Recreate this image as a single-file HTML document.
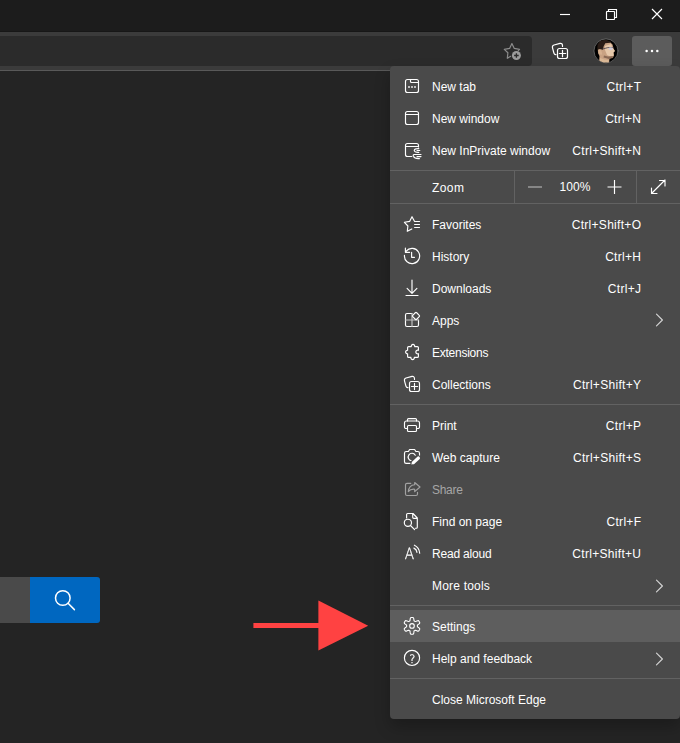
<!DOCTYPE html>
<html lang="en">
<head>
<meta charset="utf-8">
<title>Edge menu</title>
<style>
html,body{margin:0;padding:0;}
body{width:680px;height:743px;overflow:hidden;background:#242424;position:relative;
  font-family:"Liberation Sans",sans-serif;font-size:12px;color:#fff;}
.abs{position:absolute;}
#titlebar{left:0;top:0;width:680px;height:32px;background:#1c1c1c;}
#tline{left:0;top:31px;width:680px;height:1px;background:#171717;}
#toolbar{left:0;top:32px;width:680px;height:38px;background:#3b3b3b;}
#addr{left:-10px;top:36px;width:542px;height:30px;background:#2b2b2b;border-radius:4px;}
#tbline{left:0;top:70px;width:680px;height:1px;background:#595959;}
#morebtn{left:632px;top:36px;width:40px;height:30px;background:#5c5c5c;border-radius:3px;}
#search-grey{left:0;top:577px;width:30px;height:46px;background:#4a4a4a;}
#search-blue{left:30px;top:577px;width:70px;height:46px;background:#0067c0;border-radius:0 3px 3px 0;}
#menu{left:390px;top:66px;width:290px;height:653px;background:#4a4a4a;border-radius:4px;
  box-shadow:0 8px 16px rgba(0,0,0,.24);}
.row{position:absolute;left:0;width:290px;height:32px;line-height:32px;}
.row .lbl{position:absolute;left:42px;top:0;white-space:nowrap;}
.row .sc{position:absolute;right:39px;top:0;white-space:nowrap;letter-spacing:.3px;margin-right:-.3px;}
.row svg.ic{position:absolute;left:13px;top:7px;width:18px;height:18px;}
.row svg.chev{position:absolute;left:264px;top:9px;width:10px;height:14px;}
.sep{position:absolute;left:0;width:290px;height:1px;background:#626262;}
.hl{background:#5e5e5e;}
.dim{color:#a6a6a6;}
</style>
</head>
<body>
<div id="titlebar" class="abs"></div>
<div id="tline" class="abs"></div>
<div id="toolbar" class="abs"></div>
<div id="addr" class="abs"></div>
<div id="tbline" class="abs"></div>
<div id="morebtn" class="abs"></div>

<div id="search-grey" class="abs"></div>
<div id="search-blue" class="abs"></div>

<div id="menu" class="abs">
  <div class="row" style="top:5px"><span class="lbl">New tab</span><span class="sc">Ctrl+T</span></div>
  <div class="row" style="top:37px"><span class="lbl">New window</span><span class="sc">Ctrl+N</span></div>
  <div class="row" style="top:69px"><span class="lbl">New InPrivate window</span><span class="sc">Ctrl+Shift+N</span></div>
  <div class="sep" style="top:104px"></div>
  <div class="row" style="top:105px"><span class="lbl" style="left:42px;top:1px;letter-spacing:.4px">Zoom</span><span class="abs" style="left:169.5px;letter-spacing:.1px">100%</span></div>
  <div class="sep" style="top:137px"></div>
  <div class="abs" style="left:124px;top:105px;width:1px;height:32px;background:#626262"></div>
  <div class="abs" style="left:246px;top:105px;width:1px;height:32px;background:#626262"></div>
  <div class="row" style="top:143px"><span class="lbl">Favorites</span><span class="sc">Ctrl+Shift+O</span></div>
  <div class="row" style="top:175px"><span class="lbl">History</span><span class="sc">Ctrl+H</span></div>
  <div class="row" style="top:207px"><span class="lbl">Downloads</span><span class="sc">Ctrl+J</span></div>
  <div class="row" style="top:239px"><span class="lbl">Apps</span></div>
  <div class="row" style="top:271px"><span class="lbl" style="letter-spacing:-.25px">Extensions</span></div>
  <div class="row" style="top:303px"><span class="lbl">Collections</span><span class="sc">Ctrl+Shift+Y</span></div>
  <div class="sep" style="top:338px"></div>
  <div class="row" style="top:344px"><span class="lbl">Print</span><span class="sc">Ctrl+P</span></div>
  <div class="row" style="top:376px"><span class="lbl">Web capture</span><span class="sc">Ctrl+Shift+S</span></div>
  <div class="row dim" style="top:408px"><span class="lbl" style="letter-spacing:-.3px">Share</span></div>
  <div class="row" style="top:440px"><span class="lbl">Find on page</span><span class="sc">Ctrl+F</span></div>
  <div class="row" style="top:472px"><span class="lbl" style="letter-spacing:-.2px">Read aloud</span><span class="sc">Ctrl+Shift+U</span></div>
  <div class="row" style="top:504px"><span class="lbl" style="letter-spacing:.2px">More tools</span></div>
  <div class="sep" style="top:539px"></div>
  <div class="abs hl" style="left:0;top:544px;width:290px;height:32px"></div>
  <div class="row" style="top:545px"><span class="lbl">Settings</span></div>
  <div class="row" style="top:577px"><span class="lbl">Help and feedback</span></div>
  <div class="sep" style="top:612px"></div>
  <div class="row" style="top:618px"><span class="lbl">Close Microsoft Edge</span></div>
</div>

<svg id="ov" class="abs" style="left:0;top:0" width="680" height="743" viewBox="0 0 680 743" fill="none" stroke="#fff" stroke-width="1.150" stroke-linecap="round" stroke-linejoin="round">
  <!-- window controls -->
  <g stroke="#fff" stroke-linecap="butt" stroke-linejoin="miter">
    <path d="M560 14.5H570"/>
    <rect x="606.5" y="11.5" width="8" height="8" rx="0.500"/>
    <path d="M608.500 11V9.500H616.500V17.500H615"/>
    <path d="M652 9L662 19M662 9L652 19"/>
  </g>
  <!-- toolbar: add favorite star -->
  <g stroke="#8c8c8c" stroke-width="1.2">
    <path d="M510.700 56.300L507.300 58.300L507.900 52.800L504.300 49.400L509.600 48.400L511.900 43.500L514.300 48.400L519.500 49.400L518.300 50.600"/>
  </g>
  <circle cx="516.400" cy="55.500" r="4.500" fill="#9b9b9b" stroke="none"/>
  <path d="M514.100 55.500H518.700M516.400 53.200V57.800" stroke="#2b2b2b" stroke-width="1.300" stroke-linecap="butt"/>
  <!-- toolbar: collections -->
  <g stroke-width="1.2">
    <rect x="557.500" y="48.500" width="10" height="10" rx="2"/>
    <path d="M559.300 53.500H565.700M562.500 50.300V56.700"/>
    <path d="M562.500 46.500V45.800Q562.400 43 560 43.400L554 45Q552 45.600 552.500 47.800L553.900 53Q554.400 54.800 556 54.600"/>
  </g>
  <!-- avatar -->
  <defs>
    <clipPath id="avc"><circle cx="606" cy="50.900" r="11.700"/></clipPath>
    <filter id="avb" x="-20%" y="-20%" width="140%" height="140%"><feGaussianBlur stdDeviation="0.550"/></filter>
  </defs>
  <circle cx="606" cy="50.900" r="12" fill="#000" stroke="#777" stroke-width="0.700"/>
  <g clip-path="url(#avc)" stroke="none"><g filter="url(#avb)">
    <path d="M599 63L599.500 56L598 53L598.500 49.500L602 48L604 42.500L610 42L612.500 44.500L613.500 48.500L615 51L613.500 52.500L614 55L613 57.500L609.500 58.500L609 63Z" fill="#c9a283"/>
    <path d="M605 46L611 44L613 48.500L614.800 51L613.300 52.400L613.500 56L611 57L607 55L605 50Z" fill="#e6c8aa"/>
    <path d="M603.500 57.500L609 59L612.500 58L613 56L608 56.500L604 55.500Z" fill="#8b6a55"/>
    <path d="M599.800 63L600 58L604.500 59.500L608.800 60L608.500 63Z" fill="#d9b795"/>
    <path d="M597.300 52L597.600 44.500L600.500 40.800L606 39.800L611 41.800L610.300 42.800L605.300 43.200L603.600 46.500L603 49.800L600.500 49.300L598.800 50Z" fill="#2c1f17"/>
    <path d="M598 50.500Q597.800 48.800 600 49.300Q602 50.500 602 54.500Q600 55 598.800 53.500Z" fill="#d6b08f"/>
    <path d="M602.800 49L607.800 47.600L612.800 47.400" stroke="#4a4048" stroke-width="0.800" fill="none"/>
    <ellipse cx="610.700" cy="48.600" rx="2.300" ry="1.700" fill="#c9cbe0" opacity="0.750"/>
  </g></g>
  <!-- more button dots -->
  <g fill="#fff" stroke="none">
    <circle cx="646.6" cy="50.9" r="1.25"/><circle cx="652" cy="50.9" r="1.25"/><circle cx="657.3" cy="50.9" r="1.25"/>
  </g>
  <!-- search magnifier -->
  <g stroke-width="1.5">
    <circle cx="62.8" cy="598" r="7.3"/>
    <path d="M68.1 603.3L74.4 609.6"/>
  </g>
  <!-- red arrow -->
  <g stroke="none" fill="#ff4242">
    <rect x="253.4" y="623" width="66" height="5"/>
    <path d="M318.4 600.6L368.2 625.7L318.4 650.6Z"/>
  </g>

  <!-- New tab -->
  <rect x="405.5" y="79.5" width="13" height="13" rx="2"/>
  <path d="M410.5 79.5V81.5a1 1 0 0 0 1 1H418.5"/>
  <g fill="#fff" stroke="none"><rect x="408.2" y="86.2" width="1.6" height="1.6"/><rect x="411.2" y="86.2" width="1.6" height="1.6"/><rect x="414.2" y="86.2" width="1.6" height="1.6"/></g>
  <!-- New window -->
  <rect x="405.5" y="111.5" width="13" height="13" rx="2"/>
  <path d="M405.5 114.5H418.5"/>
  <!-- InPrivate -->
  <path d="M411.8 156.5H407.5a2 2 0 0 1-2-2V145.5a2 2 0 0 1 2-2H416.5a2 2 0 0 1 2 2V147M405.5 146.5H418.5"/>
  <path d="M418.8 148.6Q414.6 148.4 414.2 150.5Q414.6 152.6 418.8 152.4M417 150.5H419.8"/>
  <path d="M421 154.5H414.2Q412.8 154.6 413.4 156.2Q414.6 159 419.4 158.6M417 156.6H421"/>
  <!-- Zoom controls -->
  <path d="M528 187H542" stroke="#b4b4b4" stroke-linecap="butt"/>
  <path d="M607.5 187H621.5M614.5 180V194" stroke-linecap="butt"/>
  <path d="M651.5 193.5L665 180M659.5 180.5H665V186M651.5 188V193.5H657"/>
  <!-- Favorites -->
  <path d="M419.500 221.500H414.600L412 216.700L409.600 221.400L404.400 222.300L407.900 226L407.300 231.300L411.800 228.900M414.600 224.500H419.500M414.600 227.500H419.500"/>
  <!-- History -->
  <path d="M406.200 251.100A7.600 7.600 0 1 1 404.450 255.300M405.400 248V252.300H409.600M411.600 252.300V257.300H414.500"/>
  <!-- Downloads -->
  <path d="M412 280V293M407.1 288.4L412 293.3L416.9 288.4M406 295.5H418"/>
  <!-- Apps -->
  <path d="M412 313.5H407a1.5 1.5 0 0 0-1.5 1.5V325a1.5 1.5 0 0 0 1.5 1.5H417a1.5 1.5 0 0 0 1.5-1.5V320"/>
  <path d="M412 313.5V326.5M405.5 320H418.5" stroke="#c4c4c4"/>
  <rect x="413.2" y="313.2" width="5.6" height="5.6" rx="1" transform="rotate(45 416 316)"/>
  <!-- Extensions -->
  <path d="M408.600 346.600H411.300A1.750 1.750 0 1 1 414.700 346.600H417.400a1 1 0 0 1 1 1V350.300A1.850 1.850 0 1 0 418.400 353.700V356.400a1 1 0 0 1-1 1H414.300A1.750 1.750 0 1 1 410.900 357.400H408.600a1 1 0 0 1-1-1V353.700A1.720 1.720 0 1 1 407.600 350.300V347.600a1 1 0 0 1 1-1Z"/>
  <!-- Collections -->
  <rect x="409.5" y="381.5" width="10" height="10" rx="2"/>
  <path d="M411.4 386.5H417.6M414.5 383.4V389.6"/>
  <path d="M414.500 379.500V378.800Q414.400 376 412 376.400L406 378Q404 378.6 404.5 380.8L405.9 386Q406.4 387.8 408 387.6"/>
  <!-- Print -->
  <path d="M407.5 421V419.6a1 1 0 0 1 1-1H415.5a1 1 0 0 1 1 1V421"/>
  <path d="M407.5 428.5H406a1.5 1.5 0 0 1-1.5-1.5V423a2 2 0 0 1 2-2H417.5a2 2 0 0 1 2 2V427a1.5 1.5 0 0 1-1.5 1.5H416.5"/>
  <rect x="407.500" y="425.5" width="9" height="6" rx="1"/>
  <!-- Web capture -->
  <path d="M410 463.400H406.200a1.700 1.700 0 0 1-1.700-1.700V453.200a1.700 1.700 0 0 1 1.700-1.700H408.400L409.600 449.500H414.600L415.900 451.500H417.800a1.700 1.700 0 0 1 1.700 1.700V455.600"/>
  <path d="M415.300 455.200A3.800 3.800 0 1 0 411.300 460.800"/>
  <path d="M418.400 458L413.300 462.700" stroke="#4a4a4a" stroke-width="5.400"/>
  <path d="M418.400 458L413.400 462.600" stroke-width="3.200"/>
  <path d="M414.500 463.800L411.300 464.500L412.200 461.400Z" stroke="none" fill="#fff"/>
  <!-- Share (disabled) -->
  <g stroke="#a2a2a2">
    <path d="M410.800 483.300H407a1.500 1.500 0 0 0-1.500 1.500V494a1.500 1.500 0 0 0 1.500 1.500H416a1.500 1.500 0 0 0 1.500-1.500V492.300"/>
    <path d="M414.700 482.500L420 487L414.700 491.600V489.200Q410.500 488.800 408.300 491.600Q409 485.200 414.700 484.800Z"/>
  </g>
  <!-- Find on page -->
  <path d="M406.600 518V514.500a1 1 0 0 1 1-1H413L417.300 518V527.200a1 1 0 0 1-1 1H415.300M412.700 513.500V517.300a1 1 0 0 0 1 1H417.300"/>
  <circle cx="407.900" cy="522.800" r="3.600"/>
  <path d="M410.500 525.500L414.600 529.700"/>
  <!-- Read aloud arcs -->
  <path d="M414.400 545.200Q419.200 547.400 419.700 553.200M413.900 548.100Q416.600 549.300 417 552.300"/>
  <!-- Chevrons -->
  <g stroke="#d4d4d4"><path d="M656.500 314.200L662.400 320L656.500 325.800"/><path d="M656.500 580.200L662.400 586L656.500 591.800"/><path d="M656.500 653.200L662.400 659L656.500 664.800"/></g>
  <!-- Settings gear -->
  <path d="M417.40 625.90L417.39 625.62L417.37 625.34L417.53 625.02L418.04 624.62L418.77 624.09L419.44 623.48L419.75 622.92L419.67 622.48L419.48 622.09L419.27 621.70L419.04 621.33L418.80 620.96L418.45 620.67L417.81 620.67L416.96 620.94L416.13 621.31L415.52 621.55L415.18 621.53L414.94 621.37L414.70 621.22L414.45 621.09L414.20 620.96L414.01 620.67L413.91 620.03L413.81 619.13L413.63 618.25L413.30 617.70L412.88 617.55L412.44 617.51L412.00 617.50L411.56 617.51L411.12 617.55L410.70 617.70L410.37 618.25L410.19 619.13L410.09 620.03L409.99 620.67L409.80 620.96L409.55 621.09L409.30 621.22L409.06 621.37L408.82 621.53L408.48 621.55L407.87 621.31L407.04 620.94L406.19 620.67L405.55 620.67L405.20 620.96L404.96 621.33L404.73 621.70L404.52 622.09L404.33 622.48L404.25 622.92L404.56 623.48L405.23 624.09L405.96 624.62L406.47 625.02L406.63 625.34L406.61 625.62L406.60 625.90L406.61 626.18L406.63 626.46L406.47 626.78L405.96 627.18L405.23 627.71L404.56 628.32L404.25 628.88L404.33 629.32L404.52 629.71L404.73 630.10L404.96 630.47L405.20 630.84L405.55 631.13L406.19 631.13L407.04 630.86L407.87 630.49L408.48 630.25L408.82 630.27L409.06 630.43L409.30 630.58L409.55 630.71L409.80 630.84L409.99 631.13L410.09 631.77L410.19 632.67L410.37 633.55L410.70 634.10L411.12 634.25L411.56 634.29L412.00 634.30L412.44 634.29L412.88 634.25L413.30 634.10L413.63 633.55L413.81 632.67L413.91 631.77L414.01 631.13L414.20 630.84L414.45 630.71L414.70 630.58L414.94 630.43L415.18 630.27L415.52 630.25L416.13 630.49L416.96 630.86L417.81 631.13L418.45 631.13L418.80 630.84L419.04 630.47L419.27 630.10L419.48 629.71L419.67 629.32L419.75 628.88L419.44 628.32L418.77 627.71L418.04 627.18L417.53 626.78L417.37 626.46L417.39 626.18Z" stroke-width="1.1"/>
  <circle cx="412" cy="625.9" r="2.3" stroke-width="1.1"/>
  <!-- Help -->
  <circle cx="412" cy="657.900" r="7.600"/>
  <!-- glyph icons as real text -->
  <g stroke="#fff" stroke-width="0.35" fill="#fff" opacity="0.990" text-rendering="geometricPrecision" font-family="'DejaVu Sans Light','DejaVu Sans','Liberation Sans',sans-serif">
    <text x="404.700" y="559" font-size="15.500" transform="translate(404.700 0) scale(0.880 1) translate(-404.700 0)">A</text>
    <text x="409.300" y="662.500" font-size="11.500">?</text>
  </g>
</svg>
</body>
</html>
